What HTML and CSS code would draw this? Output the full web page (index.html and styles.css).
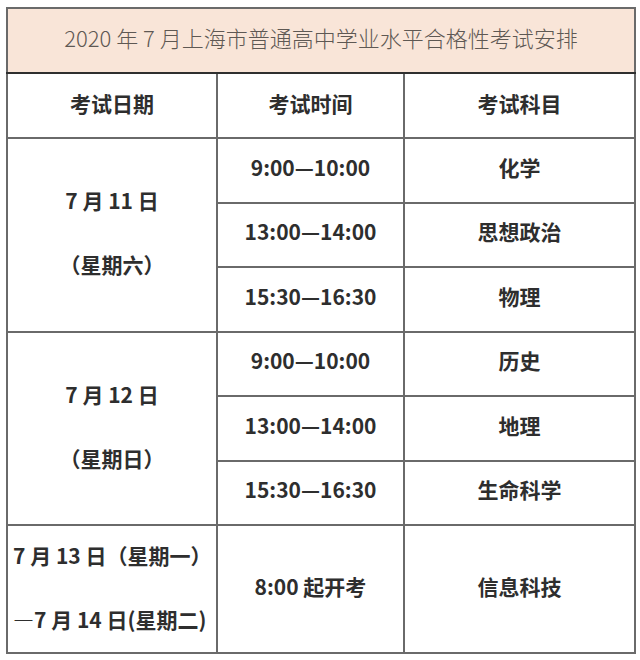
FILE: index.html
```html
<!DOCTYPE html>
<html lang="zh-CN">
<head>
<meta charset="utf-8">
<title>2020 年 7 月上海市普通高中学业水平合格性考试安排</title>
<link rel="stylesheet" href="styles.css">
</head>
<body>
<table class="schedule">
  <colgroup>
    <col class="c-date">
    <col class="c-time">
    <col class="c-subj">
  </colgroup>
  <thead>
    <tr class="title-row">
      <th colspan="3" class="title">2020 年 7 月上海市普通高中学业水平合格性考试安排</th>
    </tr>
    <tr class="head-row">
      <th>考试日期</th>
      <th>考试时间</th>
      <th>考试科目</th>
    </tr>
  </thead>
  <tbody>
    <tr class="row">
      <td rowspan="3" class="date"><div class="line">7 月 11 日</div><div class="line">（星期六）</div></td>
      <td>9:00—10:00</td>
      <td>化学</td>
    </tr>
    <tr class="row">
      <td>13:00—14:00</td>
      <td>思想政治</td>
    </tr>
    <tr class="row">
      <td>15:30—16:30</td>
      <td>物理</td>
    </tr>
    <tr class="row">
      <td rowspan="3" class="date"><div class="line">7 月 12 日</div><div class="line">（星期日）</div></td>
      <td>9:00—10:00</td>
      <td>历史</td>
    </tr>
    <tr class="row">
      <td>13:00—14:00</td>
      <td>地理</td>
    </tr>
    <tr class="row">
      <td>15:30—16:30</td>
      <td>生命科学</td>
    </tr>
    <tr class="row-tall">
      <td class="date range"><div class="line">7 月 13 日（星期一）</div><div class="line">—7 月 14 日(星期二)</div></td>
      <td>8:00 起开考</td>
      <td>信息科技</td>
    </tr>
  </tbody>
</table>
</body>
</html>
```

FILE: styles.css
```css
html, body {
  margin: 0;
  padding: 0;
  background: #ffffff;
}

body {
  padding: 7px 0 0 6px;
  font-family: "Noto Sans CJK SC", "Noto Sans", sans-serif;
  color: #2e2e2e;
}

.schedule {
  border-collapse: collapse;
  table-layout: fixed;
  width: 628px;
  border: 2px solid #5e5e5e;
}

.c-date { width: 210px; }
.c-time { width: 187px; }
.c-subj { width: 231px; }

.schedule th,
.schedule td {
  border: 2px solid #6a6a6a;
  text-align: center;
  vertical-align: middle;
  padding: 0;
  font-size: 21px;
  font-weight: 700;
  line-height: 1.2;
}

.title-row { height: 65px; }

.schedule th.title {
  background: #f9e5d8;
  color: #5e5853;
  font-weight: 300;
  font-size: 22px;
  padding-bottom: 6px;
  border-bottom: 2px solid #2f2f2f;
}

.head-row { height: 65px; }

.schedule .head-row th {
  border-top: 2px solid #2f2f2f;
  padding-bottom: 4px;
}

.row { height: 64.5px; }

.schedule .row td {
  padding-bottom: 6px;
}

.row-tall { height: 128px; }

.schedule td.date {
  padding-bottom: 5px;
}

.date .line {
  line-height: 32px;
}

.date .line + .line {
  margin-top: 32px;
}

.schedule td.range {
  text-align: left;
  padding-left: 5px;
  padding-bottom: 4px;
  white-space: nowrap;
}

.row-tall td {
  padding-bottom: 4px;
}
```
